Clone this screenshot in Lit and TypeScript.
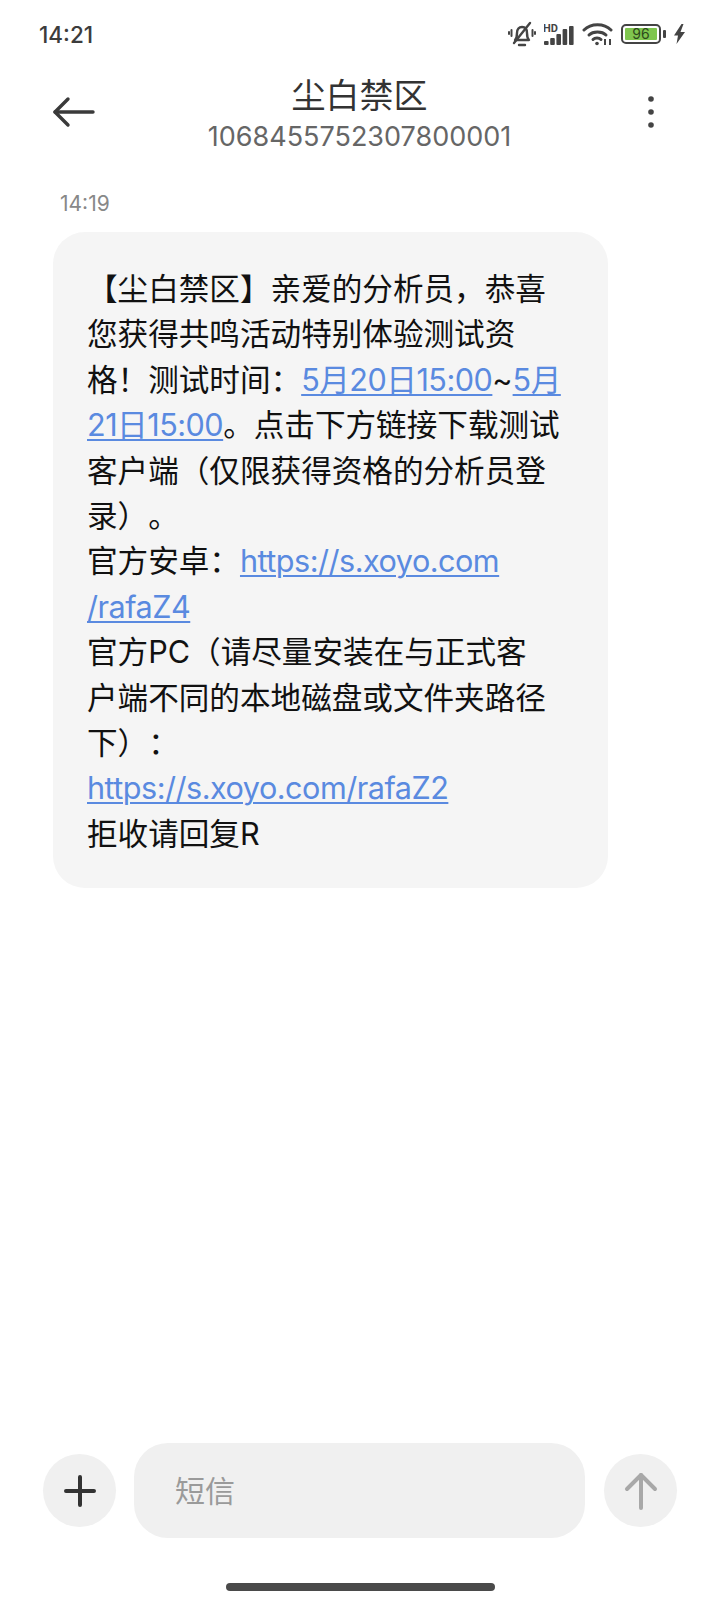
import { LitElement, html, css } from 'lit';
import { customElement } from 'lit/decorators.js';

@customElement('app-root')
export class AppRoot extends LitElement {
  static styles = css`
    :host {
      display: flex;
      flex-direction: column;
      width: 720px;
      height: 1601px;
      background: #fff;
      font-family: 'Inter', 'Noto Sans CJK SC', sans-serif;
      text-spacing-trim: space-all;
      overflow: hidden;
    }
    .status {
      display: flex;
      align-items: center;
      justify-content: space-between;
      height: 68px;
      padding: 0 35px 0 39px;
      flex: none;
      color: #333;
    }
    .time {
      font-size: 22.500px;
      font-weight: 500;
      color: #3c3c3c;
    }
    .status-icons {
      display: flex;
      align-items: center;
      gap: 8px;
    }
    .status-icons svg {
      display: block;
    }
    .battery {
      display: flex;
      align-items: center;
      width: 40px;
      height: 20px;
      box-sizing: border-box;
      border: 2px solid #444;
      border-radius: 5px;
      padding: 2px;
    }
    .battery-fill {
      display: flex;
      align-items: center;
      justify-content: center;
      width: 100%;
      height: 100%;
      background: #7fc64e;
      border-radius: 1px;
      font-size: 14px;
      line-height: 1;
      color: #2d4a1c;
    }
    .nub {
      width: 3px;
      height: 8px;
      background: #444;
      border-radius: 1px;
      margin-left: -6px;
    }
    .header {
      display: flex;
      align-items: flex-start;
      flex: none;
      height: 100px;
      padding-left: 52px;
      padding-right: 61px;
    }
    .back {
      width: 46px;
      height: 32px;
      margin-top: 28px;
      flex: none;
    }
    .title {
      flex: 1;
      display: flex;
      flex-direction: column;
      align-items: center;
      padding-right: 22px;
    }
    .name {
      font-size: 34px;
      line-height: 44px;
      margin-top: 6px;
      color: #333;
    }
    .number {
      font-size: 27px;
      line-height: 36px;
      margin-top: 1px;
      color: #666;
    }
    .more {
      width: 16px;
      height: 36px;
      margin-top: 26px;
      flex: none;
    }
    .messages {
      flex: 1;
      padding: 22px 0 0 53px;
    }
    .stamp {
      font-size: 21px;
      line-height: 28px;
      margin-left: 7px;
      margin-bottom: 14px;
      color: #888;
    }
    .bubble {
      width: 555px;
      box-sizing: border-box;
      padding: 34px 20px 32px 34px;
      background: #f5f5f5;
      border-radius: 32px;
      font-size: 30.600px;
      line-height: 45.400px;
      color: #111;
      white-space: nowrap;
    }
    .bubble a {
      color: #5a8ae0;
      text-decoration: underline;
      text-decoration-thickness: 1.500px;
      text-underline-offset: 3px;
      letter-spacing: -0.500px;
    }
    .composer {
      display: flex;
      align-items: center;
      flex: none;
      height: 95px;
      padding-left: 43px;
    }
    .round {
      display: flex;
      align-items: center;
      justify-content: center;
      width: 73px;
      height: 73px;
      border-radius: 50%;
      background: #f0f0f0;
      flex: none;
    }
    .field {
      display: flex;
      align-items: center;
      width: 451px;
      height: 95px;
      margin: 0 19px 0 18px;
      padding: 0 0 3px 41px;
      box-sizing: border-box;
      background: #f0f0f0;
      border-radius: 34px;
      font-size: 30px;
      color: #9a9a9a;
      flex: none;
    }
    .home-row {
      display: flex;
      justify-content: center;
      flex: none;
      padding: 45px 0 10px;
    }
    .home {
      width: 269px;
      height: 8px;
      border-radius: 4px;
      background: #4a4a4a;
    }
  `;

  render() {
    return html`
      <div class="status">
        <span class="time">14:21</span>
        <div class="status-icons">
          <svg width="28" height="26" viewBox="0 0 28 26" fill="none" stroke="#444" stroke-width="2.400" stroke-linecap="round" stroke-linejoin="round">
            <path d="M7 19c2-2 2-4 2-7 0-4 2-6 5-6s5 2 5 6c0 3 0 5 2 7z" />
            <path d="M11 24h6" />
            <path d="M6 22 22 2" />
            <path d="M3.500 9v6M1 11v2M24.500 9v6M27 11v2" stroke-width="2" />
          </svg>
          <svg width="30" height="22" viewBox="0 0 30 22" fill="#444">
            <rect x="0" y="18" width="4.600" height="4" rx="1" />
            <rect x="6.200" y="15" width="4.600" height="7" rx="1" />
            <rect x="12.400" y="11" width="4.600" height="11" rx="1" />
            <rect x="18.600" y="6" width="4.600" height="16" rx="1" />
            <rect x="25" y="3" width="4.600" height="19" rx="1" />
            <text x="-1" y="9" font-size="11" font-weight="700" font-family="Roboto, sans-serif">HD</text>
          </svg>
          <svg width="31" height="24" viewBox="0 0 31 24" fill="none" stroke="#444" stroke-width="3" stroke-linecap="round">
            <path d="M2 8c7-7 20-7 27 0" />
            <path d="M7 13c4-4 13-4 17 0" />
            <path d="M11 17.500c2-2 6-2 8 0" />
            <circle cx="15" cy="21.500" r="1.800" fill="#444" stroke="none" />
            <path d="M23 17v6M28 17v6" stroke-width="2" stroke-linecap="butt" />
          </svg>
          <div class="battery"><div class="battery-fill">96</div></div>
          <div class="nub"></div>
          <svg width="11" height="20" viewBox="0 0 11 20" fill="#444">
            <path d="M7.500 0 0 11.500h4L2.500 20 11 8H6.500L9.500 0z" />
          </svg>
        </div>
      </div>

      <div class="header">
        <svg class="back" viewBox="0 0 46 32" fill="none" stroke="#3a3a3a" stroke-width="3.400" stroke-linecap="round" stroke-linejoin="round">
          <path d="M3 16H41" />
          <path d="M16 3 3 16l13 13" />
        </svg>
        <div class="title">
          <span class="name">尘白禁区</span>
          <span class="number">1068455752307800001</span>
        </div>
        <svg class="more" viewBox="0 0 16 36" fill="#444">
          <circle cx="8" cy="5" r="2.800" />
          <circle cx="8" cy="18" r="2.800" />
          <circle cx="8" cy="31" r="2.800" />
        </svg>
      </div>

      <div class="messages">
        <div class="stamp">14:19</div>
        <div class="bubble">
          【尘白禁区】亲爱的分析员，恭喜<br />
          您获得共鸣活动特别体验测试资<br />
          格！测试时间：<a>5月20日15:00</a>~<a>5月</a><br />
          <a>21日15:00</a>。点击下方链接下载测试<br />
          客户端（仅限获得资格的分析员登<br />
          录）。<br />
          官方安卓：<a>https://s.xoyo.com</a><br />
          <a>/rafaZ4</a><br />
          官方PC（请尽量安装在与正式客<br />
          户端不同的本地磁盘或文件夹路径<br />
          下）：<br />
          <a>https://s.xoyo.com/rafaZ2</a><br />
          拒收请回复R
        </div>
      </div>

      <div class="composer">
        <div class="round">
          <svg width="32" height="32" viewBox="0 0 32 32" fill="none" stroke="#333" stroke-width="4" stroke-linecap="round">
            <path d="M2 16H30M16 2V30" />
          </svg>
        </div>
        <div class="field">短信</div>
        <div class="round">
          <svg width="34" height="38" viewBox="0 0 34 38" fill="none" stroke="#a8a8a8" stroke-width="4" stroke-linecap="round" stroke-linejoin="round">
            <path d="M17 3V36" />
            <path d="M3 17 17 3l14 14" />
          </svg>
        </div>
      </div>
      <div class="home-row"><div class="home"></div></div>
    `;
  }
}
